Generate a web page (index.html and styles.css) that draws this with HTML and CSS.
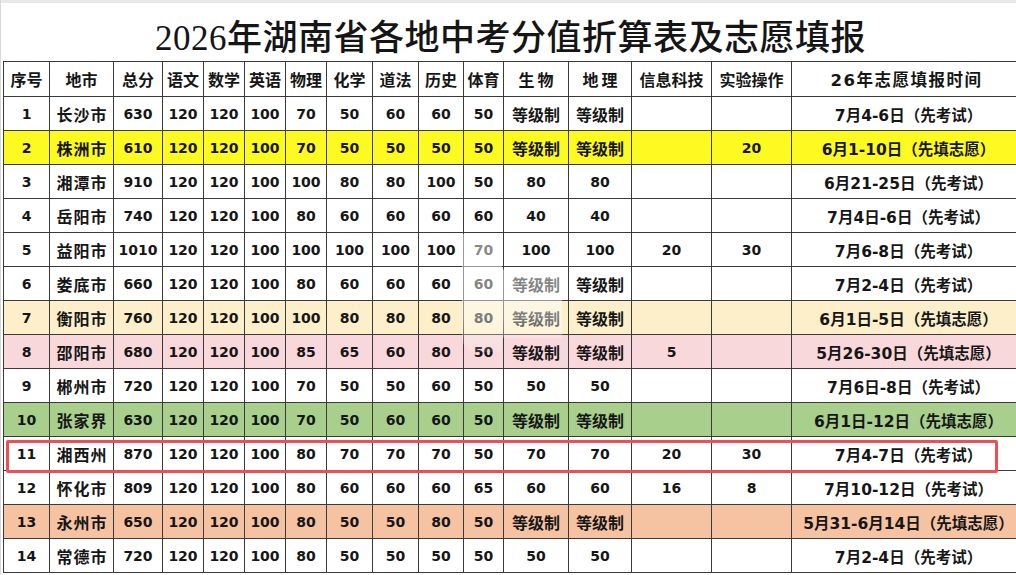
FILE: index.html
```
<!DOCTYPE html>
<html lang="zh">
<head>
<meta charset="utf-8">
<title>2026年湖南省各地中考分值折算表及志愿填报</title>
<link rel="stylesheet" href="styles.css">
</head>
<body>
<div class="page">
  <h1 class="title">2026年湖南省各地中考分值折算表及志愿填报</h1>
  <table class="grid">
    <colgroup>
      <col style="width:46px"><col style="width:64px"><col style="width:49px"><col style="width:41px"><col style="width:41px"><col style="width:41px"><col style="width:41px"><col style="width:46px"><col style="width:46px"><col style="width:45px"><col style="width:40px"><col style="width:65px"><col style="width:63px"><col style="width:80px"><col style="width:80px"><col style="width:228px">
    </colgroup>
    <thead>
      <tr>
        <th>序号</th><th>地市</th><th>总分</th><th>语文</th><th>数学</th><th>英语</th><th>物理</th><th>化学</th><th>道法</th><th>历史</th><th>体育</th><th class="wide">生物</th><th class="wide">地理</th><th>信息科技</th><th>实验操作</th><th class="time-h">26年志愿填报时间</th>
      </tr>
    </thead>
    <tbody>
      <tr><td class="n">1</td><td class="c">长沙市</td><td class="n">630</td><td class="n">120</td><td class="n">120</td><td class="n">100</td><td class="n">70</td><td class="n">50</td><td class="n">60</td><td class="n">60</td><td class="n">50</td><td class="z">等级制</td><td class="z">等级制</td><td class="n"></td><td class="n"></td><td class="t">7月4-6日（先考试）</td></tr>
      <tr class="yellow"><td class="n">2</td><td class="c">株洲市</td><td class="n">610</td><td class="n">120</td><td class="n">120</td><td class="n">100</td><td class="n">70</td><td class="n">50</td><td class="n">50</td><td class="n">50</td><td class="n">50</td><td class="z">等级制</td><td class="z">等级制</td><td class="n"></td><td class="n">20</td><td class="t">6月1-10日（先填志愿）</td></tr>
      <tr><td class="n">3</td><td class="c">湘潭市</td><td class="n">910</td><td class="n">120</td><td class="n">120</td><td class="n">100</td><td class="n">100</td><td class="n">80</td><td class="n">80</td><td class="n">100</td><td class="n">50</td><td class="n">80</td><td class="n">80</td><td class="n"></td><td class="n"></td><td class="t">6月21-25日（先考试）</td></tr>
      <tr><td class="n">4</td><td class="c">岳阳市</td><td class="n">740</td><td class="n">120</td><td class="n">120</td><td class="n">100</td><td class="n">80</td><td class="n">60</td><td class="n">60</td><td class="n">60</td><td class="n">60</td><td class="n">40</td><td class="n">40</td><td class="n"></td><td class="n"></td><td class="t">7月4日-6日（先考试）</td></tr>
      <tr><td class="n">5</td><td class="c">益阳市</td><td class="n">1010</td><td class="n">120</td><td class="n">120</td><td class="n">100</td><td class="n">100</td><td class="n">100</td><td class="n">100</td><td class="n">100</td><td class="n">70</td><td class="n">100</td><td class="n">100</td><td class="n">20</td><td class="n">30</td><td class="t">7月6-8日（先考试）</td></tr>
      <tr><td class="n">6</td><td class="c">娄底市</td><td class="n">660</td><td class="n">120</td><td class="n">120</td><td class="n">100</td><td class="n">80</td><td class="n">60</td><td class="n">60</td><td class="n">60</td><td class="n">60</td><td class="z">等级制</td><td class="z">等级制</td><td class="n"></td><td class="n"></td><td class="t">7月2-4日（先考试）</td></tr>
      <tr class="cream"><td class="n">7</td><td class="c">衡阳市</td><td class="n">760</td><td class="n">120</td><td class="n">120</td><td class="n">100</td><td class="n">100</td><td class="n">80</td><td class="n">80</td><td class="n">80</td><td class="n">80</td><td class="z">等级制</td><td class="z">等级制</td><td class="n"></td><td class="n"></td><td class="t">6月1日-5日（先填志愿）</td></tr>
      <tr class="pink"><td class="n">8</td><td class="c">邵阳市</td><td class="n">680</td><td class="n">120</td><td class="n">120</td><td class="n">100</td><td class="n">85</td><td class="n">65</td><td class="n">60</td><td class="n">80</td><td class="n">50</td><td class="z">等级制</td><td class="z">等级制</td><td class="n">5</td><td class="n"></td><td class="t">5月26-30日（先填志愿）</td></tr>
      <tr><td class="n">9</td><td class="c">郴州市</td><td class="n">720</td><td class="n">120</td><td class="n">120</td><td class="n">100</td><td class="n">70</td><td class="n">50</td><td class="n">50</td><td class="n">60</td><td class="n">50</td><td class="n">50</td><td class="n">50</td><td class="n"></td><td class="n"></td><td class="t">7月6日-8日（先考试）</td></tr>
      <tr class="green"><td class="n">10</td><td class="c">张家界</td><td class="n">630</td><td class="n">120</td><td class="n">120</td><td class="n">100</td><td class="n">70</td><td class="n">50</td><td class="n">60</td><td class="n">60</td><td class="n">50</td><td class="z">等级制</td><td class="z">等级制</td><td class="n"></td><td class="n"></td><td class="t">6月1日-12日（先填志愿）</td></tr>
      <tr><td class="n">11</td><td class="c">湘西州</td><td class="n">870</td><td class="n">120</td><td class="n">120</td><td class="n">100</td><td class="n">80</td><td class="n">70</td><td class="n">70</td><td class="n">70</td><td class="n">50</td><td class="n">70</td><td class="n">70</td><td class="n">20</td><td class="n">30</td><td class="t">7月4-7日（先考试）</td></tr>
      <tr><td class="n">12</td><td class="c">怀化市</td><td class="n">809</td><td class="n">120</td><td class="n">120</td><td class="n">100</td><td class="n">80</td><td class="n">60</td><td class="n">60</td><td class="n">60</td><td class="n">65</td><td class="n">60</td><td class="n">60</td><td class="n">16</td><td class="n">8</td><td class="t">7月10-12日（先考试）</td></tr>
      <tr class="peach"><td class="n">13</td><td class="c">永州市</td><td class="n">650</td><td class="n">120</td><td class="n">120</td><td class="n">100</td><td class="n">80</td><td class="n">50</td><td class="n">50</td><td class="n">80</td><td class="n">50</td><td class="z">等级制</td><td class="z">等级制</td><td class="n"></td><td class="n"></td><td class="t">5月31-6月14日（先填志愿）</td></tr>
      <tr><td class="n">14</td><td class="c">常德市</td><td class="n">720</td><td class="n">120</td><td class="n">120</td><td class="n">100</td><td class="n">80</td><td class="n">50</td><td class="n">50</td><td class="n">50</td><td class="n">50</td><td class="n">50</td><td class="n">50</td><td class="n"></td><td class="n"></td><td class="t">7月2-4日（先考试）</td></tr>
    </tbody>
  </table>
  <div class="glare"></div>
  <div class="highlight"></div>
</div>
</body>
</html>
```
FILE: styles.css
```
html, body {
  margin: 0;
  padding: 0;
  background: #ffffff;
}
body {
  width: 1016px;
  height: 575px;
  overflow: hidden;
}
.page {
  position: relative;
  width: 1016px;
  height: 575px;
  overflow: hidden;
  border-left: 1px solid #d8d8d8;
  box-sizing: border-box;
}
.title {
  margin: 0;
  height: 61px;
  box-sizing: border-box;
  border-top: 3px solid #e9e9e9;
  padding-top: 4px;
  padding-left: 4px;
  display: flex;
  align-items: center;
  justify-content: center;
  font-family: "Liberation Serif", "Noto Sans CJK SC", serif;
  font-weight: 500;
  font-size: 35px;
  color: #151515;
  letter-spacing: 0.5px;
}
.grid {
  margin-left: 2px;
  border-collapse: collapse;
  table-layout: fixed;
  width: 1016px;
  color: #161616;
}
.grid th, .grid td {
  border: 1.5px solid #3a3a3a;
  padding: 0;
  text-align: center;
  vertical-align: middle;
  white-space: nowrap;
  overflow: hidden;
  font-weight: 700;
}
.grid th {
  height: 34px;
  font-family: "Noto Sans CJK SC", sans-serif;
  font-size: 16px;
  background: #ffffff;
}
.grid th.wide {
  letter-spacing: 3px;
  text-indent: 3px;
}
.grid th.time-h {
  font-family: "DejaVu Sans", "Noto Sans CJK SC", sans-serif;
  font-size: 16.5px;
  letter-spacing: 1.5px;
  text-indent: 2px;
}
.grid td {
  height: 33px;
}
.grid td.n {
  font-family: "DejaVu Sans", sans-serif;
  font-size: 14px;
}
.grid td.c {
  font-family: "Noto Sans CJK SC", sans-serif;
  font-size: 16px;
  letter-spacing: 1px;
  text-indent: 1px;
}
.grid td.z {
  font-family: "Noto Sans CJK SC", sans-serif;
  font-size: 16px;
}
.grid td.t {
  font-family: "DejaVu Sans", "Noto Sans CJK SC", sans-serif;
  font-size: 15.5px;
  text-indent: 6px;
}
tr.yellow td { background: #fdfa22; }
tr.cream td { background: #fcefc9; }
tr.pink td { background: #f8d8da; }
tr.green td { background: #a8d08c; }
tr.peach td { background: #f5c3a2; }

.glare {
  position: absolute;
  left: 461px;
  top: 234px;
  width: 100px;
  height: 118px;
  clip-path: polygon(0 0, 40% 0, 40% 30%, 100% 30%, 100% 88%, 40% 88%, 40% 100%, 0 100%);
  border-radius: 0 0 0 14px;
  background: linear-gradient(180deg, rgba(255,255,255,0.5), rgba(255,255,255,0.45) 70%, rgba(255,255,255,0.1));
  pointer-events: none;
}
.highlight {
  position: absolute;
  left: 5px;
  top: 440px;
  width: 992px;
  height: 33px;
  box-sizing: border-box;
  border: 3px solid #ee4f52;
  border-radius: 2px;
  pointer-events: none;
}
```
